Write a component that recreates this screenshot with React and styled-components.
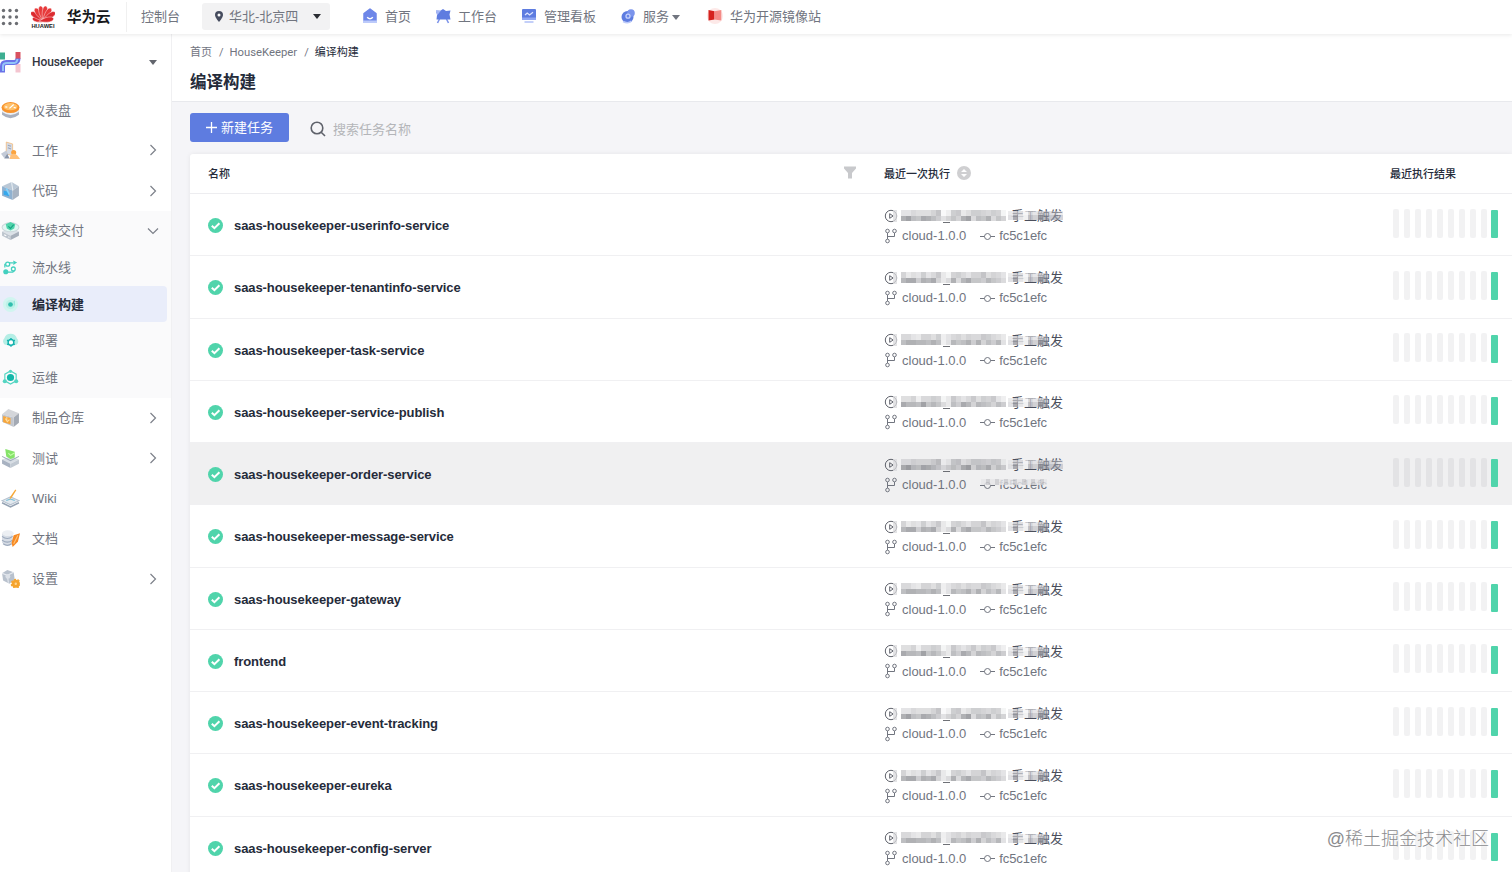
import styled, { createGlobalStyle, css } from "styled-components";

const GlobalStyle = createGlobalStyle`
  * {
    box-sizing: border-box;
  }
  body {
    margin: 0;
    overflow: hidden;
    background: #f5f5f8;
    font-family: "Liberation Sans", "Noto Sans CJK SC", sans-serif;
    font-size: 13px;
    color: #71757f;
  }
`;

const services = [
  "saas-housekeeper-userinfo-service",
  "saas-housekeeper-tenantinfo-service",
  "saas-housekeeper-task-service",
  "saas-housekeeper-service-publish",
  "saas-housekeeper-order-service",
  "saas-housekeeper-message-service",
  "saas-housekeeper-gateway",
  "frontend",
  "saas-housekeeper-event-tracking",
  "saas-housekeeper-eureka",
  "saas-housekeeper-config-server",
];

const navLinks = [
  { icon: "home", label: "首页" },
  { icon: "bench", label: "工作台" },
  { icon: "board", label: "管理看板" },
  { icon: "service", label: "服务", caret: true },
  { icon: "mirror", label: "华为开源镜像站" },
];

const pipelineMenu = [
  { icon: "flow", label: "流水线" },
  { icon: "build", label: "编译构建", active: true },
  { icon: "deploy", label: "部署" },
  { icon: "ops", label: "运维" },
];

const lowerMenu = [
  { icon: "artifact", label: "制品仓库", arrow: true },
  { icon: "test", label: "测试", arrow: true },
  { icon: "wiki", label: "Wiki" },
  { icon: "docs", label: "文档" },
  { icon: "settings", label: "设置", arrow: true },
];

const glyphs = {
  home: (
    <>
      <path d="M8 1 14 5.600V14H2V5.600z" fill="#6d86e8" stroke="#6d86e8" strokeWidth="1.500" strokeLinejoin="round" />
      <path d="M1 12.500h14V15H1z" fill="#bccafa" />
      <path d="M5.200 9.200q2.800 3 5.600 0" fill="none" stroke="#fff" strokeWidth="1.500" />
    </>
  ),
  bench: (
    <>
      <path d="m4.500 11-2 4M11.500 11l2 4" stroke="#7d94ea" strokeWidth="1.600" />
      <path d="M1 3.500 5 3l3-2 3 2 4.500-.5-1 4 1 5H1.500l.6-5z" fill="#5e7ce0" />
      <path d="m1 2 5 .5-4 5z" fill="#a4b6f5" />
    </>
  ),
  board: (
    <>
      <rect x="1" y="1" width="14" height="11" rx="1" fill="#5e7ce0" />
      <path d="m4 7 2.200-2 2.400 2L12 4.200" fill="none" stroke="#dbe3ff" strokeWidth="1.300" />
      <path d="M1 9.500h14V12H1z" fill="#8fa5f2" />
      <path d="M3.500 14h9" stroke="#a9baf6" strokeWidth="1.400" />
    </>
  ),
  service: (
    <>
      <circle cx="7.500" cy="9" r="6" fill="#5e7ce0" />
      <circle cx="11" cy="5" r="3.800" fill="#7b94ec" />
      <circle cx="8" cy="8.200" r="2" fill="#6985e8" stroke="#c5d1fb" strokeWidth="1.300" />
      <path d="M3 13.500q5 2.600 8.500-.5" stroke="#bccafa" fill="none" strokeWidth="1.500" />
    </>
  ),
  mirror: (
    <>
      <circle cx="8" cy="8" r="8" fill="#fde9e8" />
      <path d="m1.500 2 6 1.200v8.300l-6 1z" fill="#d5221e" />
      <path d="m7.500 3.200 6.800-1.200v10.500l-6.800-1z" fill="#f48b87" />
    </>
  ),
  dashboard: (
    <>
      <path d="M1 8v5q8 6.500 16 0V8z" fill="#a9b0bf" />
      <path d="M1 8v2.500q8 5.500 16 0V8z" fill="#eceff4" />
      <ellipse cx="9" cy="6.200" rx="8.500" ry="5.200" fill="#f8932c" />
      <ellipse cx="9" cy="5.400" rx="6.700" ry="3.400" fill="#ffc069" />
      <path d="m8 7 4-3.600M4 5.500l2 .3M12 6l2 .4" stroke="#fff" strokeWidth="1.200" />
    </>
  ),
  work: (
    <>
      <path d="m5 1 6 1.800v11.500L5 12z" fill="#d5dae3" stroke="#f4b974" strokeWidth=".7" />
      <path d="m6.500 4 3 1M6.500 6.500l3 1" stroke="#9ba5b8" />
      <path d="m0 12 5-3 2 4-4 3z" fill="#c3cad7" />
      <circle cx="12" cy="11" r="2.400" fill="#fba33e" />
      <path d="M8 17q1-5 4-5t6 5z" fill="#ffc078" />
      <path d="M3 16.500 6 12l2 4.500z" fill="#8793a8" />
    </>
  ),
  code: (
    <>
      <path d="m1 5 9-4 7 4-6 4z" fill="#bac8d6" />
      <path d="m1 5 10 4v9L1 14z" fill="#8fb1d0" />
      <path d="m11 9 6-4v9l-6 4z" fill="#a7b3c2" />
      <path d="m10 1 1.200 8" stroke="#e7edf3" />
      <path d="m2.500 9 5 1.500v4l-5-1.500z" fill="#35a8ed" />
      <path d="m5 7 3 6" stroke="#83d4ff" strokeWidth="1.500" />
    </>
  ),
  delivery: (
    <>
      <path d="m1 10 8-3.500 8 3.500-8 4z" fill="#dce2e8" />
      <path d="m1 10 8 4v4l-8-4z" fill="#bdc5ce" />
      <path d="m9 14 8-4v4l-8 4z" fill="#a7b0bb" />
      <ellipse cx="9" cy="6" rx="8" ry="4.200" fill="#e0f7f2" stroke="#ccd8dc" />
      <path d="m4.500 3 4.500-2 4.500 2-1 4-3.500 2-3.500-2z" fill="#50d4ab" />
      <path d="m7 5 2 2 3-3.500" stroke="#16a182" fill="none" />
      <path d="m3 13 2 1M7 15l1 .5" stroke="#fff" />
    </>
  ),
  flow: (
    <>
      <path d="M5 4h7M4 14h6q3 0 3-3M3 9V5" fill="none" stroke="#43d0bf" strokeWidth="1.300" />
      <circle cx="6" cy="5.500" r="2.100" fill="#fff" stroke="#43d0bf" strokeWidth="1.400" />
      <circle cx="12" cy="10.500" r="2" fill="#fff" stroke="#43d0bf" strokeWidth="1.400" />
      <circle cx="4" cy="13.500" r="2.700" fill="#43d0bf" />
      <path d="m12 1.500 4 2.300-4 2.500z" fill="#43d0bf" />
    </>
  ),
  build: (
    <>
      <circle cx="9" cy="9" r="8" fill="#d1f5f0" />
      <circle cx="9" cy="9" r="5" fill="#bdf1e8" />
      <circle cx="9" cy="9" r="2.500" fill="#31bfae" />
      <path d="M13 5v5" stroke="#8ce6d8" />
    </>
  ),
  deploy: (
    <>
      <path d="M3 13.500a4.500 4.500 0 0 1-.5-7A7 7 0 0 1 15.800 7a4 4 0 0 1-.5 6.500z" fill="#b5eee5" />
      <circle cx="9.500" cy="11" r="3" fill="#fff" stroke="#13b2ae" strokeWidth="1.500" />
      <path d="M9.500 6.400V8M9.500 14v1.600M5.400 8.700l1.500.9M12 12.500l1.600.8M5.400 13.300l1.600-.8M12 9.600l1.600-.9" stroke="#13b2ae" strokeWidth="1.500" />
    </>
  ),
  ops: (
    <>
      <path d="m9 2 6 3.500v7L9 16l-6-3.500v-7z" fill="none" stroke="#54d5c2" strokeWidth="1.200" />
      <circle cx="9" cy="9" r="3.800" fill="#13b7a9" />
      <circle cx="9" cy="2.500" r="1.700" fill="#54d5c2" />
      <circle cx="3" cy="13" r="2.200" fill="#54d5c2" />
      <circle cx="15" cy="13" r="2.200" fill="#54d5c2" />
    </>
  ),
  artifact: (
    <>
      <path d="m1 6 6-5 10 4-5 4z" fill="#d4d6da" />
      <path d="m12 9 5-4v9l-5 4z" fill="#a4aab4" />
      <path d="m1 6 11 3v9L1 13z" fill="#c2c6cd" />
      <path d="m2 7.500 7 2v6l-7-2z" fill="#f7a63b" />
      <path d="m4 10 2 3 2-2M5.500 8.500v4" stroke="#ffdc9e" fill="none" />
    </>
  ),
  test: (
    <>
      <path d="m1 10 8-3 8 3-8 4z" fill="#d7dde4" />
      <path d="m1 10 8 4v4l-8-4z" fill="#a8b2c1" />
      <path d="m9 14 8-4v4l-8 4z" fill="#c1c9d2" />
      <path d="m1 7 8 4 8-4" fill="none" stroke="#9fabb8" />
      <path d="m4 0 9 2.500V8l-4 1.500L5 7z" fill="#86e36a" />
      <path d="m7 4 2 2 4-2.500" fill="none" stroke="#c9ffae" />
    </>
  ),
  wiki: (
    <>
      <path d="m1 13 8 4 8-4" fill="none" stroke="#94a2b3" strokeWidth="1.500" />
      <path d="m1 11 8-3.500 8 3.500-8 4z" fill="#e2e9ef" stroke="#b7c2cf" />
      <path d="m5 11 4-1.500 4 1.500" fill="none" stroke="#75bdd8" />
      <path d="m8 10 1-3 4.500-6.500 1 .8-4.500 7z" fill="#f7a735" />
    </>
  ),
  docs: (
    <>
      <path d="M1 4v9q5 5 10 1V4z" fill="#d6dce5" />
      <ellipse cx="6.500" cy="4" rx="5.500" ry="2.700" fill="#eceff3" />
      <path d="M1 7q5 4 10 0M1 10.500q5 4 10 0M2 14q4 3 8 0" fill="none" stroke="#9ca9bc" strokeWidth="1.100" />
      <path d="m12 6 6-2-2 8-5 5-1-4z" fill="#f78a24" />
      <path d="m12 14 4-8" stroke="#ffc477" />
    </>
  ),
  settings: (
    <>
      <path d="m1 4 5-3 6 2 1 7-5 4-6-3z" fill="#b8c1cd" />
      <path d="m1 4 5 2 6-3M6 6l1 7" fill="none" stroke="#e6eaf0" />
      <circle cx="6.500" cy="7" r="2.300" fill="#dce1e8" />
      <circle cx="14" cy="14" r="2.500" fill="#ffd592" stroke="#f5a42d" strokeWidth="2.700" />
      <circle cx="14" cy="14" r="4.200" fill="none" stroke="#f5a42d" strokeWidth="1.200" strokeDasharray="2 1.500" />
    </>
  ),
};

function Glyph({ name, size = 18 }) {
  const box = ["home", "bench", "board", "service", "mirror"].includes(name) ? 16 : 18;
  return (
    <svg width={size} height={size} viewBox={`0 0 ${box} ${box}`}>
      {glyphs[name]}
    </svg>
  );
}

function AppsIcon() {
  return (
    <svg width="18" height="18" fill="#6c6e73">
      {[2.5, 9, 15.5].map((y) =>
        [2.5, 9, 15.5].map((x) => <circle key={`${x}-${y}`} cx={x} cy={y} r="1.7" />)
      )}
    </svg>
  );
}

function HuaweiFlower() {
  const petals = [-80, -56, -33, -11, 11, 33, 56, 80];
  return (
    <svg width="24" height="18" viewBox="0 0 24 18">
      {petals.map((angle) => (
        <path
          key={angle}
          d="M12 15.800C9.600 10 9 6 10 2.500Q12 -1 14 2.500C15 6 14.400 10 12 15.800Z"
          fill={Math.abs(angle) > 50 ? "#dc2a2f" : "#e73a3b"}
          stroke="#fff"
          strokeWidth=".4"
          transform={`rotate(${angle} 12 15.500) translate(0 ${Math.abs(angle) > 60 ? 4 : 0})`}
        />
      ))}
    </svg>
  );
}

function ProjectLogo() {
  return (
    <svg width="21" height="21" viewBox="0 0 21 21">
      <path d="M0 .5h5v7H0z" fill="#3dae91" />
      <path d="M15.500 0h5v7h-5z" fill="#d9515e" />
      <path d="M15.500 12h5v8.500h-5z" fill="#f4c5d0" />
      <path d="M2.500 20.500V14q0-3.500 4-3.500h7.500q4 0 4-4" fill="none" stroke="#6a72e8" strokeWidth="5" />
      <path d="M3 19v-5q0-3 4-3h7q3 0 3.500-4" fill="none" stroke="#93c4f8" strokeWidth="2" />
    </svg>
  );
}

function Caret({ color = "#4d5059", size = 8 }) {
  return (
    <svg width={size} height="5" viewBox="0 0 8 5">
      <path d="M0 0h8L4 5z" fill={color} />
    </svg>
  );
}

function Chevron({ down }) {
  return (
    <svg width="12" height="12" fill="none" stroke="#7c8089" strokeWidth="1.200">
      <path d={down ? "m1 3.500 5 5 5-5" : "m3.500 1 5 5-5 5"} />
    </svg>
  );
}

function CheckIcon() {
  return (
    <svg width="15" height="15">
      <circle cx="7.500" cy="7.500" r="7.500" fill="#50d4ab" />
      <path d="m3.800 7.700 2.600 2.500 5-5" fill="none" stroke="#fff" strokeWidth="2" />
    </svg>
  );
}

const mosaicTop = [4, 3, 4, 2, 5, 4, 5, 7, 0, 1, 6, 6, 3, 4, 6, 5, 7, 5, 6, 4, 1];
const mosaicBottom = [8, 9, 8, 6, 9, 7, 8, 5, 1, 2, 7, 4, 8, 9, 4, 7, 5, 7, 4, 6, 3];

function Mosaic({ seed }) {
  const shade = (value, index) => 0.04 + (value + ((seed * 3 + index * 5) % 4)) * 0.04;
  return (
    <svg width="107" height="16" fill="#4b4d55">
      {mosaicTop.map((value, i) => (
        <rect key={i} x={i * 5} y="2" width="5" height="6" opacity={shade(value, i) * 0.75} />
      ))}
      {mosaicBottom.map((value, i) => (
        <rect key={i} x={i * 5} y="8" width="5" height="5" opacity={shade(value, i + 2)} />
      ))}
      <rect x="42" y="14" width="7" height="1" opacity=".8" />
    </svg>
  );
}

const maskTop = ["#e4e4e6", "#c3c3c8", "#d2d2d6", "#f3f3f4", "#d0d0d4", "#dedee1", "#cacace", "#b3b4bb", "#bfc0c8", "#c7c8ce", "#d9d9dd"];
const maskBottom = ["#dcdcdf", "#9d9da4", "#e2e2e4", "#eeeeef", "#b9b9bf", "#c9c9cd", "#8f9099", "#8a8c98", "#a5a7b2", "#9a9ca9", "#b7b8c2"];

// the last character stays readable except on the rows that are masked in full
function TriggerMask({ wide }) {
  const cells = wide ? 11 : 8;
  return (
    <MaskSvg width="55" height="16">
      {maskTop.slice(0, cells).map((fill, i) => (
        <rect key={i} x={i * 5} y="4" width="5" height="4" fill={fill} opacity={i > 6 ? 0.5 : 0.75} />
      ))}
      {maskBottom.slice(0, cells).map((fill, i) => (
        <rect key={i} x={i * 5} y="8" width="5" height="5" fill={fill} opacity={i > 6 ? 0.6 : 0.85} />
      ))}
    </MaskSvg>
  );
}

function ServiceRow({ name, index }) {
  const hovered = index === 4;
  return (
    <Row $hovered={hovered}>
      <NameCell>
        <CheckIcon />
        <ServiceName>{name}</ServiceName>
      </NameCell>
      <RunCell>
        <TriggerLine>
          <svg width="14" height="14" fill="none" stroke="#60636c">
            <circle cx="7" cy="7" r="5.700" />
            <path d="m5.700 4.700 3.400 2.300-3.400 2.300z" />
            <path d="M9 1h4v12H9z" fill="#d9d9dc" stroke="none" opacity=".75" />
          </svg>
          <Mosaic seed={index} />
          <Trigger>
            手工触发
            <TriggerMask wide={index === 0 || hovered} />
          </Trigger>
        </TriggerLine>
        <CommitLine>
          <svg width="14" height="16" fill="none" stroke="#71757f">
            <circle cx="3.500" cy="3" r="1.800" />
            <circle cx="10.500" cy="3" r="1.800" />
            <circle cx="3.500" cy="13" r="1.800" />
            <path d="M3.500 5v6M10.500 5v3.500h-7" />
          </svg>
          <Branch>cloud-1.0.0</Branch>
          <svg width="15" height="10" fill="none" stroke="#71757f">
            <circle cx="7.500" cy="5.500" r="3" />
            <path d="M0 5.500h4.500M10.500 5.500H15" />
          </svg>
          <Commit>
            fc5c1efc
            {hovered && <CommitMask />}
          </Commit>
        </CommitLine>
      </RunCell>
      <Results>
        {Array.from({ length: 9 }, (_, i) => (
          <Bar key={i} />
        ))}
        <Bar $success />
      </Results>
    </Row>
  );
}

function MenuItem({ icon, label, arrow, active, sub, open }) {
  return (
    <Item $active={active} $sub={sub} $open={open}>
      <Glyph name={icon} size={sub ? 17 : 19} />
      <ItemLabel $latin={label === "Wiki"}>{label}</ItemLabel>
      {(arrow || open) && <Chevron down={open} />}
    </Item>
  );
}

export default function App() {
  return (
    <>
      <GlobalStyle />
      <Page>
        <TopBar>
          <AppsIcon />
          <Brand>
            <HuaweiFlower />
            <BrandText>HUAWEI</BrandText>
          </Brand>
          <CloudName>华为云</CloudName>
          <Console>控制台</Console>
          <Region>
            <svg width="8" height="11" viewBox="0 0 8 11">
              <path d="M4 0a4 4 0 0 1 4 4c0 2.500-4 7-4 7S0 6.500 0 4a4 4 0 0 1 4-4z" fill="#464c5e" />
              <circle cx="4" cy="4" r="1.500" fill="#fff" />
            </svg>
            <span>华北-北京四</span>
            <Caret color="#2b2d33" />
          </Region>
          <Nav>
            {navLinks.map((link) => (
              <NavLink key={link.label}>
                <Glyph name={link.icon} size={16} />
                <span>{link.label}</span>
                {link.caret && <Caret color="#71757f" />}
              </NavLink>
            ))}
          </Nav>
        </TopBar>

        <Body>
          <Sidebar>
            <Project>
              <ProjectLogo />
              <ProjectName>HouseKeeper</ProjectName>
              <Caret color="#62656d" />
            </Project>
            <MenuItem icon="dashboard" label="仪表盘" />
            <MenuItem icon="work" label="工作" arrow />
            <MenuItem icon="code" label="代码" arrow />
            <Group>
              <MenuItem icon="delivery" label="持续交付" open />
              {pipelineMenu.map((item) => (
                <MenuItem key={item.label} {...item} sub />
              ))}
            </Group>
            {lowerMenu.map((item) => (
              <MenuItem key={item.label} {...item} />
            ))}
          </Sidebar>

          <Main>
            <PageHead>
              <Breadcrumb>
                <span>首页</span>
                <span>/</span>
                <Crumb>HouseKeeper</Crumb>
                <span>/</span>
                <Current>编译构建</Current>
              </Breadcrumb>
              <Title>编译构建</Title>
            </PageHead>
            <Toolbar>
              <CreateButton>
                <svg width="11" height="11" stroke="#fff" strokeWidth="1.300">
                  <path d="M5.500 0v11M0 5.500h11" />
                </svg>
                <span>新建任务</span>
              </CreateButton>
              <Search>
                <svg width="16" height="16" fill="none" stroke="#5f626b" strokeWidth="1.600">
                  <circle cx="7" cy="7" r="5.800" />
                  <path d="m11.200 11.200 3.800 3.800" />
                </svg>
                <span>搜索任务名称</span>
              </Search>
            </Toolbar>
            <Table>
              <HeadRow>
                <HeadCell>
                  <span>名称</span>
                  <FilterIcon width="12" height="13">
                    <path d="M0 .5h12v2L8 7v5.500H4V7L0 2.500z" fill="#c8c9cc" />
                  </FilterIcon>
                </HeadCell>
                <HeadCell>
                  <span>最近一次执行</span>
                  <svg width="14" height="14">
                    <circle cx="7" cy="7" r="7" fill="#cfcfd1" />
                    <path d="M7 3 10 6H4zM7 11l3-3H4z" fill="#fff" />
                  </svg>
                </HeadCell>
                <HeadCell>
                  <span>最近执行结果</span>
                </HeadCell>
              </HeadRow>
              {services.map((name, index) => (
                <ServiceRow key={name} name={name} index={index} />
              ))}
            </Table>
          </Main>
        </Body>
        <Watermark>@稀土掘金技术社区</Watermark>
      </Page>
    </>
  );
}

const Page = styled.div`
  position: relative;
  display: flex;
  flex-direction: column;
  width: 1512px;
  height: 872px;
  overflow: hidden;
`;

const TopBar = styled.header`
  display: flex;
  align-items: center;
  flex: none;
  height: 34px;
  padding-left: 1px;
  background: #fff;
  box-shadow: 0 1px 4px rgba(0, 0, 0, 0.09);
  z-index: 1;
`;
const Brand = styled.div`
  display: flex;
  flex-direction: column;
  align-items: center;
  width: 24px;
  margin-left: 12px;
`;
const BrandText = styled.span`
  font-size: 5.8px;
  line-height: 6px;
  font-weight: 700;
  color: #222;
`;
const CloudName = styled.strong`
  margin-left: 12px;
  width: 60px;
  border-right: 1px solid #f0f0f0;
  line-height: 30px;
  font-size: 14.5px;
  color: #17181c;
`;
const Console = styled.span`
  width: 61px;
  margin-left: 14px;
  padding-bottom: 3px;
`;
const Region = styled.div`
  display: flex;
  align-items: center;
  width: 128px;
  height: 27px;
  margin-top: -1px;
  padding: 0 9px 0 13px;
  border-radius: 3px;
  background: #f2f2f3;

  span {
    flex: 1;
    margin-left: 6px;
    padding-bottom: 2px;
  }
`;
const Nav = styled.nav`
  display: flex;
  gap: 24px;
  margin-left: 32px;
`;
const NavLink = styled.a`
  display: flex;
  align-items: center;
  gap: 7px;

  span {
    padding-bottom: 3px;
  }
  svg:first-child {
    margin-top: -2px;
  }
  span + svg {
    margin-left: -4px;
    margin-right: 3px;
  }
`;

const Body = styled.div`
  display: flex;
  flex: 1;
  min-height: 0;
`;
const Sidebar = styled.aside`
  display: flex;
  flex-direction: column;
  flex: none;
  width: 172px;
  background: #fff;
  border-right: 1px solid #f0f0f2;
`;
const Project = styled.div`
  display: flex;
  align-items: center;
  flex: none;
  height: 56px;
  padding-right: 14px;
`;
const ProjectName = styled.span`
  flex: 1;
  margin-left: 11px;
  font: 500 12px Roboto, sans-serif;
  letter-spacing: -0.08px;
  color: #33363f;
`;
const Group = styled.div`
  padding: 0 0 2px;
  background: #fafafb;
`;
const Item = styled.div`
  display: flex;
  align-items: center;
  flex: none;
  height: 40.3px;
  padding: 0 12px 0 1px;

  svg:first-child {
    flex: none;
    width: 19px;
  }

  ${(props) =>
    props.$open &&
    css`
      height: 38.4px;
      padding-top: 1px;
    `}
  ${(props) =>
    props.$sub &&
    css`
      height: 36.6px;
      margin-right: 4px;
      border-radius: 0 4px 4px 0;
    `}
  ${(props) =>
    props.$active &&
    css`
      background: #e9edfa;
      color: #252b3a;
      font-weight: 700;
    `}
`;
const ItemLabel = styled.span`
  flex: 1;
  margin-left: 12px;
  padding-bottom: ${(props) => (props.$latin ? "0" : "2px")};
`;

const Main = styled.main`
  display: flex;
  flex-direction: column;
  flex: 1;
  min-width: 0;
`;
const PageHead = styled.div`
  flex: none;
  height: 68px;
  padding: 10px 18px 0;
  background: #fff;
  border-bottom: 1px solid #e8e9ed;
`;
const Breadcrumb = styled.div`
  display: flex;
  gap: 7px;
  height: 18px;
  line-height: 18px;
  font-family: Roboto, "Noto Sans CJK SC", sans-serif;
  font-size: 11px;
`;
const Crumb = styled.span`
  margin-left: -1px;
  font-size: 11.3px;
`;
const Current = styled.span`
  margin-left: -1px;
  color: #252b3a;
`;
const Title = styled.h1`
  margin: 8px 0 0;
  font-size: 16.5px;
  line-height: 24px;
  color: #252b3a;
`;
const Toolbar = styled.div`
  display: flex;
  flex: none;
  align-items: flex-start;
  height: 52px;
  padding: 11px 18px 0;
`;
const CreateButton = styled.button`
  display: flex;
  align-items: center;
  justify-content: center;
  gap: 4px;
  width: 99px;
  height: 29px;
  padding: 0;
  border: 0;
  border-radius: 3px;
  background: #5e7ce0;
  color: #fff;
  font: inherit;

  span {
    padding-bottom: 2px;
  }
`;
const Search = styled.div`
  display: flex;
  align-items: center;
  gap: 7px;
  height: 32px;
  margin-left: 21px;
  color: #b4b5b9;

  span {
    padding-bottom: 2px;
  }
`;

const Table = styled.section`
  flex: none;
  margin-left: 18px;
  background: #fff;
  border-radius: 3px 0 0 0;
  box-shadow: 0 0 5px rgba(0, 0, 0, 0.07);
`;
const columns = css`
  display: grid;
  grid-template-columns: 694px 506px 1fr;
  align-items: center;
`;
const HeadRow = styled.div`
  ${columns}
  height: 40px;
  border-bottom: 1px solid #ededf0;
`;
const HeadCell = styled.div`
  display: flex;
  align-items: center;
  gap: 7px;
  font-size: 11px;
  font-weight: 500;
  color: #252b3a;

  span {
    padding-bottom: 1px;
  }
  svg {
    margin-bottom: 2px;
  }
  &:first-child {
    padding: 0 28px 0 18px;
  }
`;
const FilterIcon = styled.svg`
  margin-left: auto;
`;
const Row = styled.div`
  ${columns}
  height: 62.25px;
  padding-top: 2px;
  border-bottom: 1px solid #f0f0f2;
  background: ${(props) => (props.$hovered ? "#f0f0f1" : "#fff")};
`;
const NameCell = styled.div`
  display: flex;
  align-items: center;
  gap: 11px;
  padding-left: 18px;
`;
const ServiceName = styled.strong`
  font-size: 13px;
  letter-spacing: -0.09px;
  color: #252b3a;
`;
const RunCell = styled.div`
  display: flex;
  flex-direction: column;
`;
const TriggerLine = styled.div`
  display: flex;
  align-items: center;
  height: 20px;

  svg + svg {
    margin-left: 3px;
  }
`;
const Trigger = styled.span`
  position: relative;
  margin-left: 3px;
  padding-bottom: 2px;
  color: #4b4f5c;
`;
const MaskSvg = styled.svg`
  position: absolute;
  left: -3px;
  top: 2px;
`;
const CommitLine = styled.div`
  display: flex;
  align-items: center;
  height: 20px;
`;
const Branch = styled.span`
  margin: 0 14px 0 4px;
`;
const Commit = styled.span`
  position: relative;
  margin-left: 4px;
  letter-spacing: -0.1px;
`;
const CommitMask = styled.i`
  position: absolute;
  left: -18px;
  top: 2px;
  width: 66px;
  height: 6px;
  background: repeating-linear-gradient(90deg, #e6e6e8 0 5px, #c9c9cd 5px 9px);
  opacity: 0.8;
`;
const Results = styled.div`
  display: flex;
  align-items: center;
  gap: 5px;
  padding-left: 3px;
`;
const Bar = styled.i`
  width: 6px;
  height: 29px;
  border-radius: 2px;
  margin-top: -5px;
  background: rgba(37, 38, 50, 0.06);

  ${(props) =>
    props.$success &&
    css`
      width: 7px;
      height: 28px;
      margin: -3px 0 0 -1px;
      border-radius: 1px;
      background: #50d4ab;
    `}
`;

const Watermark = styled.div`
  position: absolute;
  right: 23px;
  bottom: 20px;
  font-size: 18px;
  line-height: 26px;
  font-weight: 300;
  color: #8b8b8e;
  text-shadow: 0 0 2px #fff;
`;
